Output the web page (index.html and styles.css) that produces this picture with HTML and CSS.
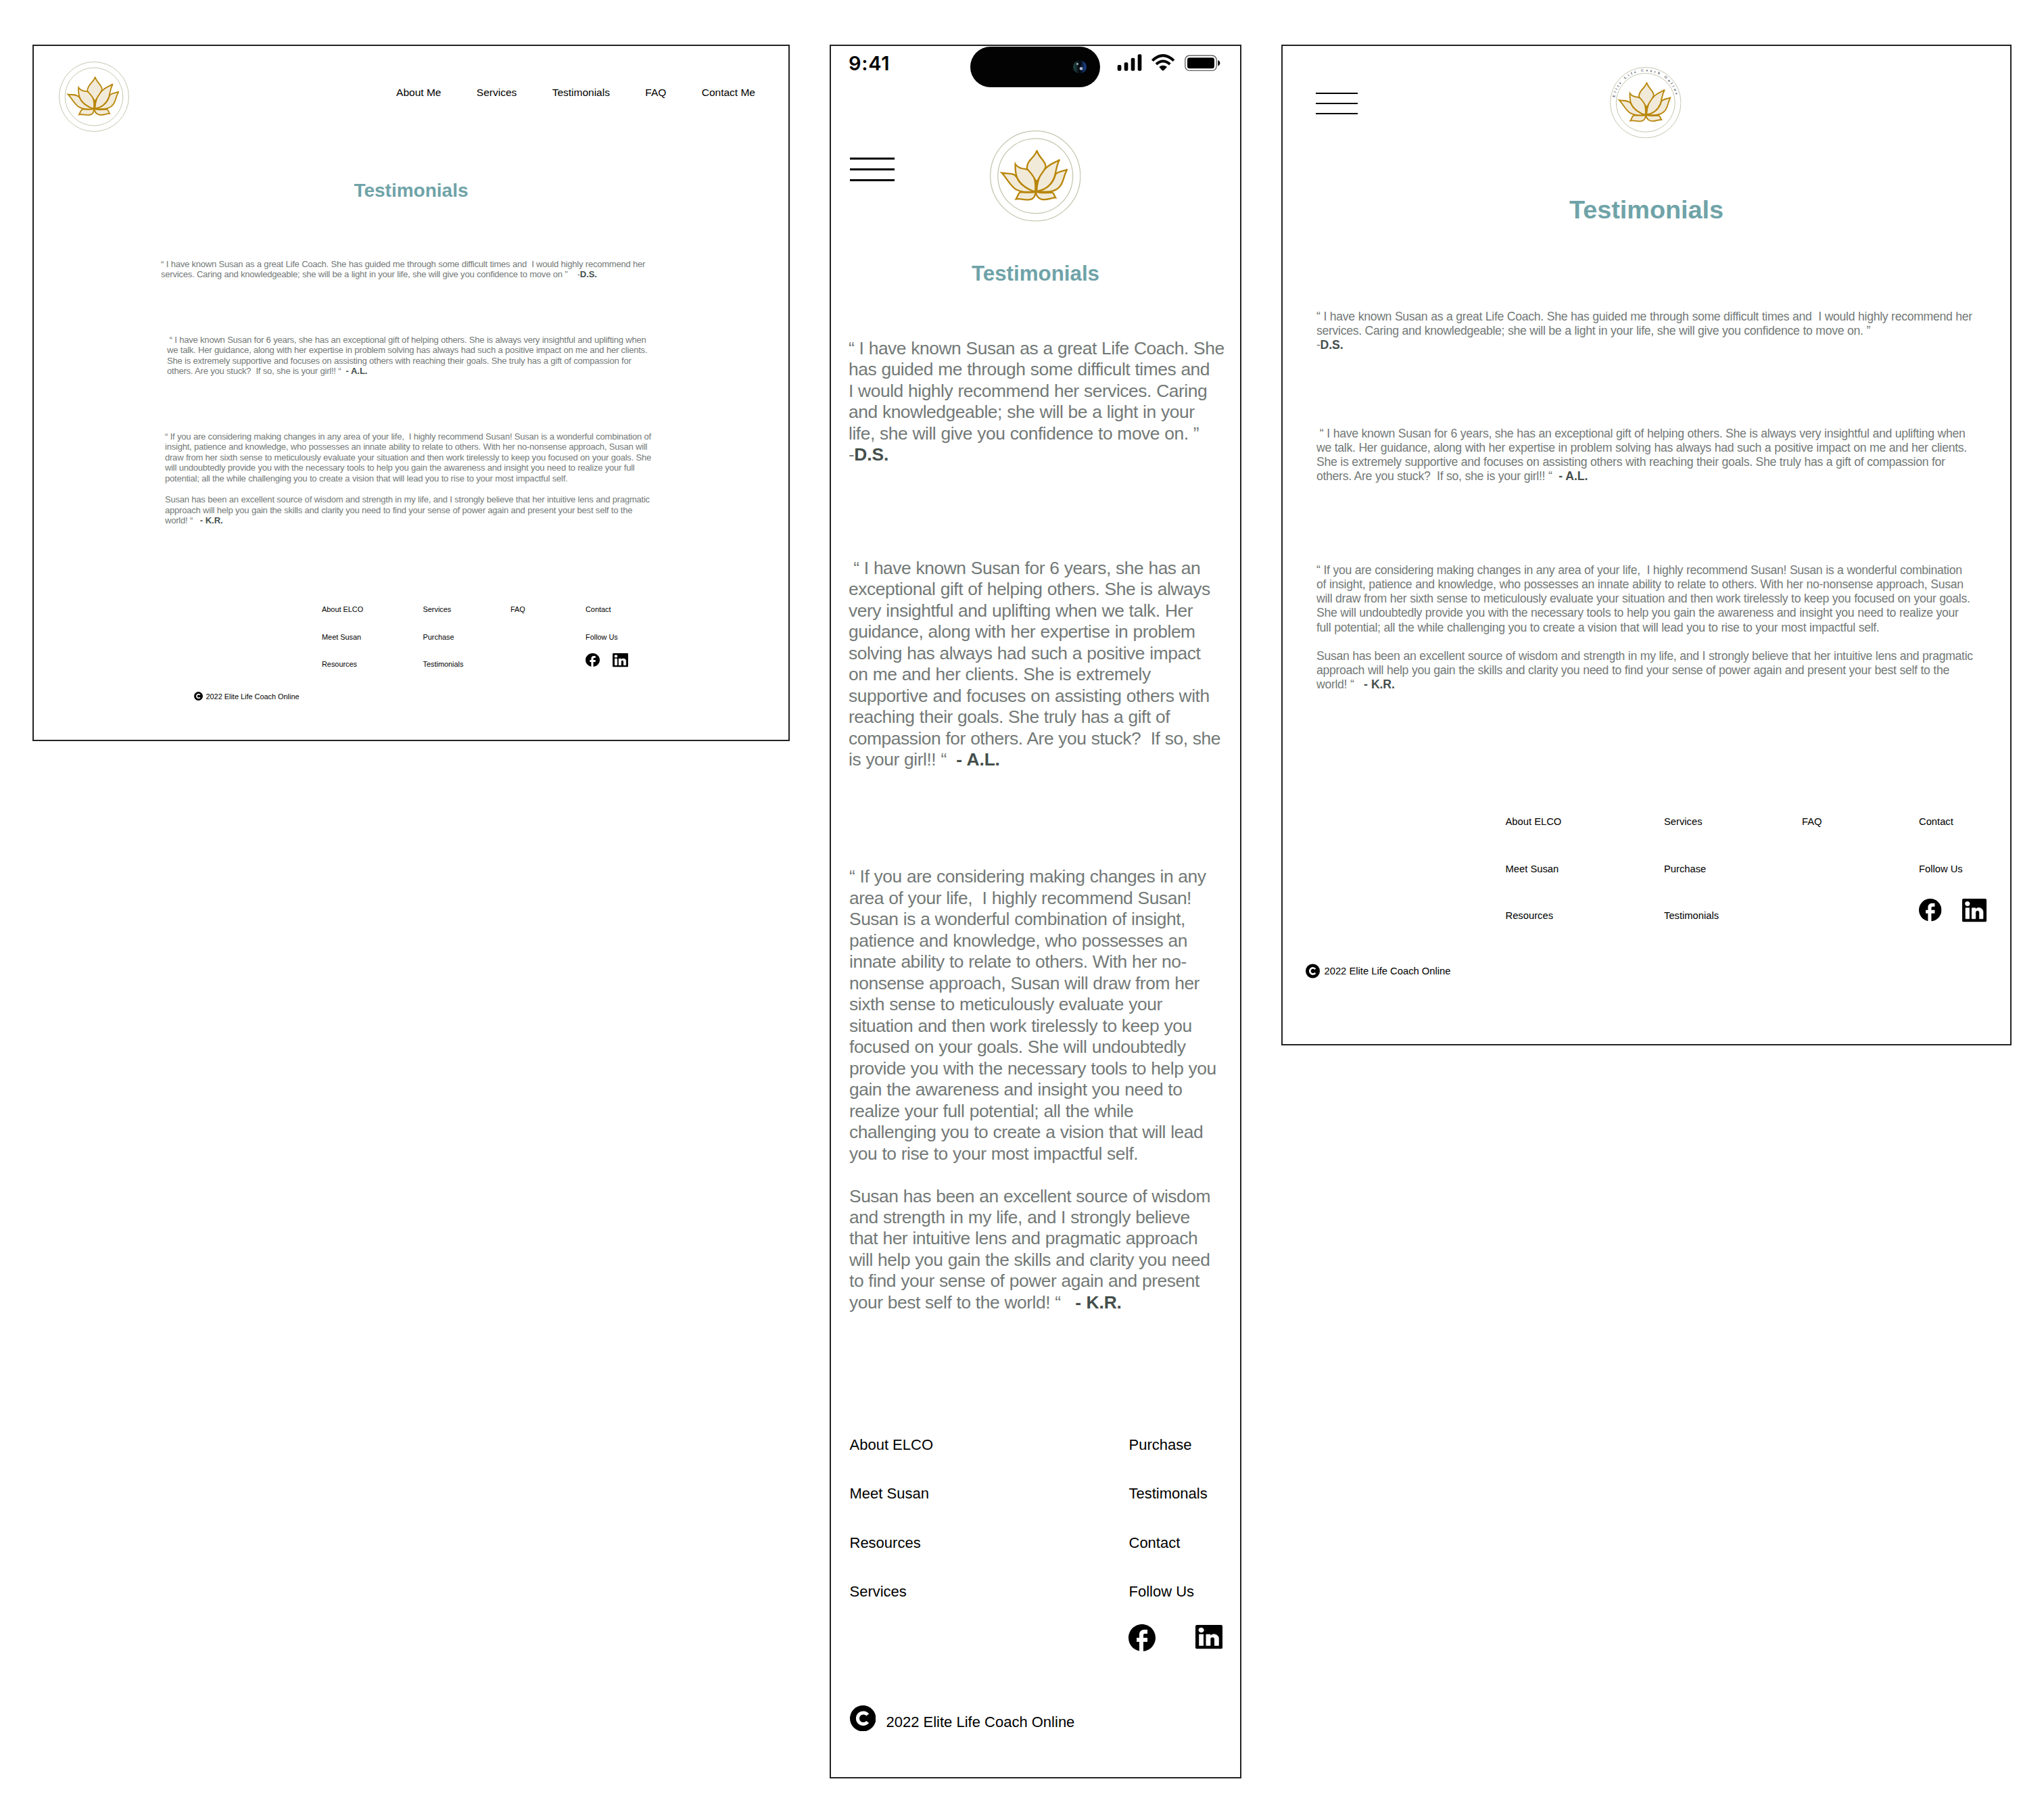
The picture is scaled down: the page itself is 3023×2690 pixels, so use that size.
FILE: index.html
```html
<!DOCTYPE html>
<html lang="en">
<head>
<meta charset="utf-8">
<title>Testimonials – Elite Life Coach Online</title>
<link rel="stylesheet" href="styles.css">
</head>
<body>
<svg class="sprite" aria-hidden="true">
  <symbol id="lotus" viewBox="103 381 403 403">
    <g fill="none" stroke="#c5c4ae" stroke-width="3.8">
      <circle cx="304.5" cy="582.5" r="199.5"/>
      <circle cx="304.5" cy="582.5" r="166"/>
    </g>
    <g fill="#f2ead8" stroke="#b8860b" stroke-width="7" stroke-linejoin="miter">
      <path d="M156 569C176 590 188 618 214 639C236 655 275 655 302 652C265 640 235 620 221 587C210 568 180 573 156 569Z"/>
      <path d="M446 553C430 562 405 561 394 575C385 610 360 640 312 650C345 655 385 655 407 635C432 615 428 580 446 553Z"/>
      <path d="M216 530C215 550 216 570 223 588C236 620 275 645 304 652C309 600 294 556 262 552C240 550 225 545 216 530Z"/>
      <path d="M412 510C402 519 375 525 352 547C325 570 312 600 310 650C350 645 375 620 388 590C398 560 396 540 412 510Z"/>
      <path d="M311 469C305 500 267 510 267 548C270 560 300 575 310 618C318 580 348 560 350 541C351 515 318 500 311 469Z"/>
      <path d="M236 655C228 662 225 675 219 685C240 681 260 691 280 687C300 683 303 670 306 652C290 660 260 653 236 655Z"/>
      <path d="M306 652C308 675 325 688 345 687C365 687 380 678 394 679C388 670 388 660 380 656C350 655 330 662 306 652Z"/>
    </g>
    <path d="M310 600L306 655" fill="none" stroke="#b8860b" stroke-width="8"/>
  </symbol>
  <symbol id="facebook" viewBox="2 2 20 20" preserveAspectRatio="none">
    <path d="M22 12c0-5.52-4.48-10-10-10S2 6.48 2 12c0 4.84 3.44 8.87 8 9.8V15H8v-3h2V9.5C10 7.57 11.57 6 13.5 6H16v3h-2c-.55 0-1 .45-1 1v2h3v3h-3v6.95c5.05-.5 9-4.76 9-9.95z"/>
  </symbol>
  <symbol id="linkedin" viewBox="3 3 18 18" preserveAspectRatio="none">
    <rect x="3" y="3" width="18" height="18" rx="1"/>
    <path fill="#fff" stroke="#fff" stroke-width=".3" d="M18.500 18.500v-5.300a3.260 3.260 0 0 0-3.260-3.260c-.85 0-1.840.52-2.320 1.300v-1.110h-2.790v8.370h2.790v-4.930c0-.77.62-1.400 1.390-1.400a1.400 1.400 0 0 1 1.400 1.400v4.930zM6.880 8.560a1.680 1.680 0 0 0 1.680-1.680c0-.93-.75-1.690-1.680-1.690a1.690 1.690 0 0 0-1.690 1.690c0 .93.76 1.680 1.690 1.680zM8.270 18.500v-8.370H5.500v8.370z"/>
  </symbol>
  <symbol id="copyright" viewBox="0 0 20 20">
    <circle cx="10" cy="10" r="10"/>
    <path d="M13.6 7.3A4.3 4.3 0 1 0 13.6 12.7" fill="none" stroke="#fff" stroke-width="2.6"/>
  </symbol>
</svg>

<main class="board">
  <section class="screen desktop">
    <header class="top">
      <svg class="logo"><use href="#lotus"/></svg>
      <nav class="nav"><a>About Me</a><a>Services</a><a>Testimonials</a><a>FAQ</a><a>Contact Me</a></nav>
    </header>
    <h1>Testimonials</h1>
    <blockquote class="q1"><p>“ I have known Susan as a great Life Coach. She has guided me through some difficult times and  I would highly recommend her
services. Caring and knowledgeable; she will be a light in your life, she will give you confidence to move on ”    -<b>D.S.</b></p></blockquote>
    <blockquote class="q2"><p> “ I have known Susan for 6 years, she has an exceptional gift of helping others. She is always very insightful and uplifting when
we talk. Her guidance, along with her expertise in problem solving has always had such a positive impact on me and her clients.
She is extremely supportive and focuses on assisting others with reaching their goals. She truly has a gift of compassion for
others. Are you stuck?  If so, she is your girl!! “  <b>- A.L.</b></p></blockquote>
    <blockquote class="q3"><p>“ If you are considering making changes in any area of your life,  I highly recommend Susan! Susan is a wonderful combination of
insight, patience and knowledge, who possesses an innate ability to relate to others. With her no-nonsense approach, Susan will
draw from her sixth sense to meticulously evaluate your situation and then work tirelessly to keep you focused on your goals. She
will undoubtedly provide you with the necessary tools to help you gain the awareness and insight you need to realize your full
potential; all the while challenging you to create a vision that will lead you to rise to your most impactful self.</p>
<p>Susan has been an excellent source of wisdom and strength in my life, and I strongly believe that her intuitive lens and pragmatic
approach will help you gain the skills and clarity you need to find your sense of power again and present your best self to the
world! “   <b>- K.R.</b></p></blockquote>
    <footer>
      <div class="links">
        <ul><li>About ELCO</li><li>Meet Susan</li><li>Resources</li></ul>
        <ul><li>Services</li><li>Purchase</li><li>Testimonials</li></ul>
        <ul><li>FAQ</li></ul>
        <ul><li>Contact</li><li>Follow Us</li>
          <li class="social"><svg class="fb"><use href="#facebook"/></svg><svg class="in"><use href="#linkedin"/></svg></li></ul>
      </div>
      <div class="copy"><svg><use href="#copyright"/></svg><span>2022 Elite Life Coach Online</span></div>
    </footer>
  </section>

  <section class="screen phone">
    <div class="status">
      <span class="time">9:41</span>
      <span class="island"><i class="lens"></i></span>
      <svg class="indicators" viewBox="665 36 465 86">
        <rect x="670" y="90" width="17" height="26" rx="6"/>
        <rect x="700" y="79" width="17" height="37" rx="6"/>
        <rect x="730" y="59" width="17" height="57" rx="6"/>
        <rect x="760" y="43" width="17" height="73" rx="6"/>
        <g fill="none" stroke="#000" stroke-width="12">
          <path d="M825 71Q872 26 920 71"/>
          <path d="M842 87Q872 60 903 87"/>
        </g>
        <path d="M855 99Q872 85 890 99L877 113Q872 118 867 113Z"/>
        <rect x="970.5" y="48.500" width="139" height="67" rx="19" fill="none" stroke="#4a4a4a" stroke-width="3.5"/>
        <rect x="980" y="58" width="120" height="48" rx="10"/>
        <path d="M1116 69Q1125 73 1125 82T1116 95Z"/>
      </svg>
    </div>
    <header class="top">
      <span class="burger"><i></i><i></i><i></i></span>
      <svg class="logo"><use href="#lotus"/></svg>
    </header>
    <h1>Testimonials</h1>
    <blockquote class="q1"><p>“ I have known Susan as a great Life Coach. She
has guided me through some difficult times and
I would highly recommend her services. Caring
and knowledgeable; she will be a light in your
life, she will give you confidence to move on. ”
-<b>D.S.</b></p></blockquote>
    <blockquote class="q2"><p> “ I have known Susan for 6 years, she has an
exceptional gift of helping others. She is always
very insightful and uplifting when we talk. Her
guidance, along with her expertise in problem
solving has always had such a positive impact
on me and her clients. She is extremely
supportive and focuses on assisting others with
reaching their goals. She truly has a gift of
compassion for others. Are you stuck?  If so, she
is your girl!! “  <b>- A.L.</b></p></blockquote>
    <blockquote class="q3"><p>“ If you are considering making changes in any
area of your life,  I highly recommend Susan!
Susan is a wonderful combination of insight,
patience and knowledge, who possesses an
innate ability to relate to others. With her no-
nonsense approach, Susan will draw from her
sixth sense to meticulously evaluate your
situation and then work tirelessly to keep you
focused on your goals. She will undoubtedly
provide you with the necessary tools to help you
gain the awareness and insight you need to
realize your full potential; all the while
challenging you to create a vision that will lead
you to rise to your most impactful self.</p>
<p>Susan has been an excellent source of wisdom
and strength in my life, and I strongly believe
that her intuitive lens and pragmatic approach
will help you gain the skills and clarity you need
to find your sense of power again and present
your best self to the world! “   <b>- K.R.</b></p></blockquote>
    <footer>
      <div class="links">
        <ul><li>About ELCO</li><li>Meet Susan</li><li>Resources</li><li>Services</li></ul>
        <ul><li>Purchase</li><li>Testimonals</li><li>Contact</li><li>Follow Us</li>
          <li class="social"><svg class="fb"><use href="#facebook"/></svg><svg class="in"><use href="#linkedin"/></svg></li></ul>
      </div>
      <div class="copy"><svg><use href="#copyright"/></svg><span>2022 Elite Life Coach Online</span></div>
    </footer>
  </section>

  <section class="screen tablet">
    <header class="top">
      <span class="burger"><i></i><i></i><i></i></span>
      <svg class="logo" viewBox="103 381 403 403">
        <use href="#lotus" x="103" y="381" width="403" height="403"/>
        <path id="ring" d="M130.900 552.600A176 176 0 0 1 475.700 541.700" fill="none"/>
        <text class="ring-text" textLength="478"><textPath href="#ring" textLength="478">Elite Life Coach Online</textPath></text>
      </svg>
    </header>
    <h1>Testimonials</h1>
    <blockquote class="q1"><p>“ I have known Susan as a great Life Coach. She has guided me through some difficult times and  I would highly recommend her
services. Caring and knowledgeable; she will be a light in your life, she will give you confidence to move on. ”
-<b>D.S.</b></p></blockquote>
    <blockquote class="q2"><p> “ I have known Susan for 6 years, she has an exceptional gift of helping others. She is always very insightful and uplifting when
we talk. Her guidance, along with her expertise in problem solving has always had such a positive impact on me and her clients.
She is extremely supportive and focuses on assisting others with reaching their goals. She truly has a gift of compassion for
others. Are you stuck?  If so, she is your girl!! “  <b>- A.L.</b></p></blockquote>
    <blockquote class="q3"><p>“ If you are considering making changes in any area of your life,  I highly recommend Susan! Susan is a wonderful combination
of insight, patience and knowledge, who possesses an innate ability to relate to others. With her no-nonsense approach, Susan
will draw from her sixth sense to meticulously evaluate your situation and then work tirelessly to keep you focused on your goals.
She will undoubtedly provide you with the necessary tools to help you gain the awareness and insight you need to realize your
full potential; all the while challenging you to create a vision that will lead you to rise to your most impactful self.</p>
<p>Susan has been an excellent source of wisdom and strength in my life, and I strongly believe that her intuitive lens and pragmatic
approach will help you gain the skills and clarity you need to find your sense of power again and present your best self to the
world! “   <b>- K.R.</b></p></blockquote>
    <footer>
      <div class="links">
        <ul><li>About ELCO</li><li>Meet Susan</li><li>Resources</li></ul>
        <ul><li>Services</li><li>Purchase</li><li>Testimonials</li></ul>
        <ul><li>FAQ</li></ul>
        <ul><li>Contact</li><li>Follow Us</li>
          <li class="social"><svg class="fb"><use href="#facebook"/></svg><svg class="in"><use href="#linkedin"/></svg></li></ul>
      </div>
      <div class="copy"><svg><use href="#copyright"/></svg><span>2022 Elite Life Coach Online</span></div>
    </footer>
  </section>
</main>
</body>
</html>
```
FILE: styles.css
```css
* { box-sizing: border-box; margin: 0; padding: 0; }
body { background: #fff; color: #000; font-family: "Liberation Sans", Arial, sans-serif; }
.sprite { display: none; }
svg { display: block; flex: none; }
ul { list-style: none; }

.board { display: flex; align-items: flex-start; padding: 66px 0 0 48px; gap: 59px; }
.screen { flex: none; border: 2px solid #222; background: #fff; }
.desktop { width: 1120px; height: 1030px; }
.phone { width: 609px; height: 2564px; }
.tablet { width: 1080px; height: 1480px; }

.top { display: flex; align-items: flex-start; }
h1 { color: #6fa3a8; font-weight: 700; text-align: center; }

blockquote { color: #737977; font-size: var(--fs); line-height: var(--lh); letter-spacing: -0.0173em; word-spacing: 0.0135em; }
blockquote p { white-space: pre; }
blockquote p + p { margin-top: var(--lh); }
blockquote b { color: #454f4c; letter-spacing: -0.005em; }

.links { display: grid; }
.links li { line-height: var(--row); white-space: nowrap; }
.links .social { display: flex; align-items: flex-start; line-height: 0; }
.copy { display: flex; align-items: flex-start; white-space: nowrap; }

.burger { display: flex; flex-direction: column; flex: none; }
.burger i { height: 3px; background: #000; }

/* desktop */
.desktop .top { padding: 22.500px 49px 0 36.500px; justify-content: space-between; }
.desktop .logo { width: 104px; height: 104px; }
.nav { display: flex; gap: 52.4px; padding-top: 36.500px; font-size: 15.5px; line-height: 20px; white-space: nowrap; }
.desktop h1 { margin-top: 71.500px; font-size: 28px; line-height: 32px; }
.desktop blockquote { --fs: 13.03px; --lh: 15.55px; }
.desktop .q1 { margin: 84.500px 0 0 188px; }
.desktop .q2 { margin: 81px 0 0 197px; }
.desktop .q3 { margin: 81px 0 0 194px; }
.desktop footer { margin-top: 103.500px; font-size: 10.9px; --row: 40.5px; }
.desktop .links { grid-template-columns: 149.500px 129.500px 111px auto; padding-left: 426px; }
.desktop .social { padding-top: 4px; height: 40.500px; }
.desktop .fb { width: 21px; height: 20px; }
.desktop .in { width: 23px; height: 20.500px; margin-left: 19px; }
.desktop .copy { margin: 20px 0 0 237px; gap: 4.5px; line-height: 14px; }
.desktop .copy svg { width: 13px; height: 13px; }

/* phone */
.status { display: grid; grid-template-columns: 179.500px 192px 155px; padding: 1px 0 0 26px; height: 61px; }
.time { padding-top: 10px; font: 600 29px/30px Inter, sans-serif; letter-spacing: 0.7px; }
.island { display: flex; align-items: center; justify-content: flex-end; height: 60px; padding-right: 20px; border-radius: 30px; background: #030303; }
.lens { width: 20px; height: 20px; border-radius: 50%; background:
  radial-gradient(circle at 60% 62%, #b9c6e6 0 1.5px, transparent 3px),
  radial-gradient(circle at 32% 28%, #9fb8b4 0 1px, transparent 2px),
  linear-gradient(90deg, #1c3b3a 15%, #060a10 45%, #060a10 55%, #173a78 85%); }
.indicators { width: 155px; height: 28.670px; margin: 9px 0 0 24.700px; }
.phone .top { margin-top: 64px; padding-left: 28px; }
.phone .burger { width: 65.500px; gap: 13px; margin-top: 39.500px; }
.phone .logo { width: 134.500px; height: 134.500px; margin-left: 141.500px; }
.phone h1 { margin-top: 59px; font-size: 31.3px; line-height: 36px; }
.phone blockquote { --fs: 26.4px; --lh: 31.48px; }
.phone .q1 { margin: 77.500px 0 0 26px; }
.phone .q2 { margin: 136px 0 0 26px; }
.phone .q3 { margin: 141.500px 0 0 27px; }
.phone footer { margin-top: 158.500px; padding-left: 27.500px; font-size: 22px; --row: 72.3px; }
.phone .links { grid-template-columns: 413px auto; }
.phone .social { padding-top: 11.500px; }
.phone .fb { width: 40px; height: 40px; margin-left: -1px; }
.phone .in { width: 40px; height: 35.500px; margin: 1.500px 0 0 59.500px; }
.phone .copy { margin-top: 80px; gap: 15.500px; line-height: 26px; }
.phone .copy svg { width: 38.500px; height: 38.500px; }
.phone .copy span { padding-top: 12.500px; }

/* tablet */
.tablet .top { padding: 31px 0 0 49px; }
.tablet .burger { width: 62px; gap: 13px; margin-top: 37.500px; }
.tablet .burger i { height: 2px; }
.tablet .logo { width: 105.500px; height: 105.500px; margin-left: 373px; }
.ring-text { font: 700 20px "Liberation Serif", serif; fill: #3b3f52; }
.tablet h1 { margin-top: 83.500px; font-size: 37.8px; line-height: 44px; }
.tablet blockquote { --fs: 17.64px; --lh: 21.05px; margin-left: 50px; }
.tablet .q1 { margin-top: 125.500px; }
.tablet .q2 { margin-top: 110px; }
.tablet .q3 { margin-top: 118.500px; }
.tablet footer { margin-top: 158.500px; font-size: 14.75px; --row: 69.5px; }
.tablet .links { grid-template-columns: 234.500px 204px 173px auto; padding-left: 329.500px; }
.tablet .social { padding-top: 9px; height: 69.500px; }
.tablet .fb { width: 33.500px; height: 33.500px; }
.tablet .in { width: 36px; height: 34.500px; margin-left: 30px; }
.tablet .copy { margin: 35px 0 0 34px; gap: 6.500px; line-height: 18px; }
.tablet .copy svg { width: 21px; height: 22px; }
.tablet .copy span { padding-top: 2px; }
```
